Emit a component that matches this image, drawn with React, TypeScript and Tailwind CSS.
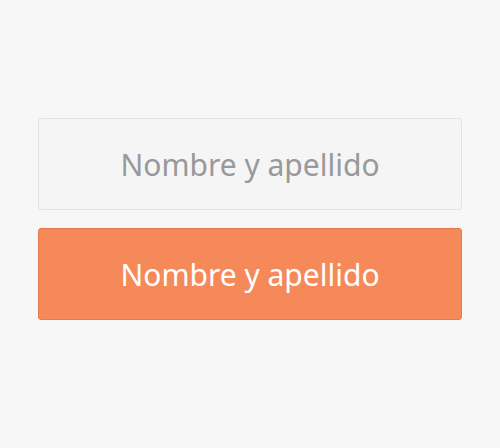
export default function App() {
  return (
    <div className="min-h-[448px] bg-[#f7f7f7] px-[38px] pt-[118px] font-['Noto_Sans',sans-serif]">
      <div className="flex flex-col gap-[18px]">
        <input
          type="text"
          placeholder="Nombre y apellido"
          className="h-[92px] w-full rounded-[3px] border border-[#e2e2e2] bg-[#f5f5f5] text-center text-[30px] text-[#555] placeholder:text-[#999] outline-none"
        />
        <button className="h-[92px] w-full rounded-[3px] border border-[#e8794b] bg-[#f5895a] text-[30px] text-white">
          Nombre y apellido
        </button>
      </div>
    </div>
  );
}
